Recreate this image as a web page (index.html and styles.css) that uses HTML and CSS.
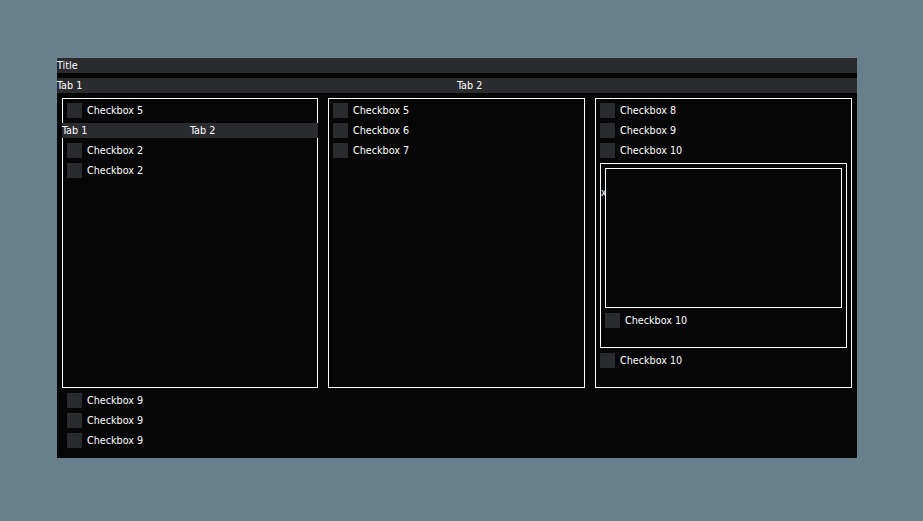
FILE: index.html
```html
<!DOCTYPE html>
<html>
<head>
<meta charset="utf-8">
<link rel="stylesheet" href="styles.css">
</head>
<body>
<div class="window">
  <div class="titlebar">Title</div>
  <div class="tabs">
    <div class="tab">Tab 1</div>
    <div class="tab">Tab 2</div>
  </div>
  <div class="content">
    <div class="panels">
      <div class="panel">
        <div class="row"><span class="box"></span><span>Checkbox 5</span></div>
        <div class="subtabs">
          <div class="subtab">Tab 1</div>
          <div class="subtab">Tab 2</div>
        </div>
        <div class="row"><span class="box"></span><span>Checkbox 2</span></div>
        <div class="row"><span class="box"></span><span>Checkbox 2</span></div>
      </div>
      <div class="panel">
        <div class="row"><span class="box"></span><span>Checkbox 5</span></div>
        <div class="row"><span class="box"></span><span>Checkbox 6</span></div>
        <div class="row"><span class="box"></span><span>Checkbox 7</span></div>
      </div>
      <div class="panel">
        <div class="row"><span class="box"></span><span>Checkbox 8</span></div>
        <div class="row"><span class="box"></span><span>Checkbox 9</span></div>
        <div class="row"><span class="box"></span><span>Checkbox 10</span></div>
        <div class="group">
          <span class="mark">x</span>
          <div class="innerbox"></div>
          <div class="row"><span class="box"></span><span>Checkbox 10</span></div>
        </div>
        <div class="row"><span class="box"></span><span>Checkbox 10</span></div>
      </div>
    </div>
    <div class="footer">
      <div class="row"><span class="box"></span><span>Checkbox 9</span></div>
      <div class="row"><span class="box"></span><span>Checkbox 9</span></div>
      <div class="row"><span class="box"></span><span>Checkbox 9</span></div>
    </div>
  </div>
</div>
</body>
</html>
```

FILE: styles.css
```css
html, body {
  margin: 0;
  padding: 0;
}
body {
  background: #687f8c;
  width: 923px;
  height: 521px;
  padding: 58px 0 0 57px;
  box-sizing: border-box;
  font-family: "DejaVu Sans", "Liberation Sans", sans-serif;
  font-stretch: condensed;
  font-size: 10.7px;
  color: #ffffff;
}
.window {
  width: 800px;
  height: 400px;
  background: #060606;
  display: flex;
  flex-direction: column;
}
.titlebar {
  height: 15px;
  line-height: 15px;
  background: #2a2b2f;
}
.tabs {
  margin-top: 5px;
  height: 15px;
  line-height: 15px;
  display: flex;
  background: #2a2b2f;
}
.tab {
  flex: 1;
}
.content {
  padding: 5px;
  display: flex;
  flex-direction: column;
  gap: 5px;
}
.panels {
  display: grid;
  grid-template-columns: 256px 257px 257px;
  gap: 10px;
  height: 290px;
}
.panel {
  box-shadow: inset 0 0 0 1px #ffffff;
  padding: 5px;
  display: flex;
  flex-direction: column;
  gap: 5px;
  min-width: 0;
}
.footer {
  padding: 0 5px;
  display: flex;
  flex-direction: column;
  gap: 5px;
}
.row {
  height: 15px;
  line-height: 15px;
  display: flex;
  align-items: center;
  gap: 5px;
  flex: none;
}
.box {
  width: 15px;
  height: 15px;
  background: #2a2b2f;
  flex: none;
}
.subtabs {
  margin: 0 -5px;
  height: 15px;
  line-height: 15px;
  background: #2a2b2f;
  display: flex;
  flex: none;
}
.subtab {
  width: 128px;
}
.group {
  position: relative;
  height: 185px;
  box-sizing: border-box;
  box-shadow: inset 0 0 0 1px #ffffff;
  padding: 5px;
  display: flex;
  flex-direction: column;
  gap: 5px;
  flex: none;
}
.innerbox {
  height: 140px;
  box-shadow: inset 0 0 0 1px #ffffff;
  flex: none;
  position: relative;
}
.mark {
  position: absolute;
  left: 1px;
  top: 22px;
  line-height: 15px;
  font-size: 10px;
}
```
